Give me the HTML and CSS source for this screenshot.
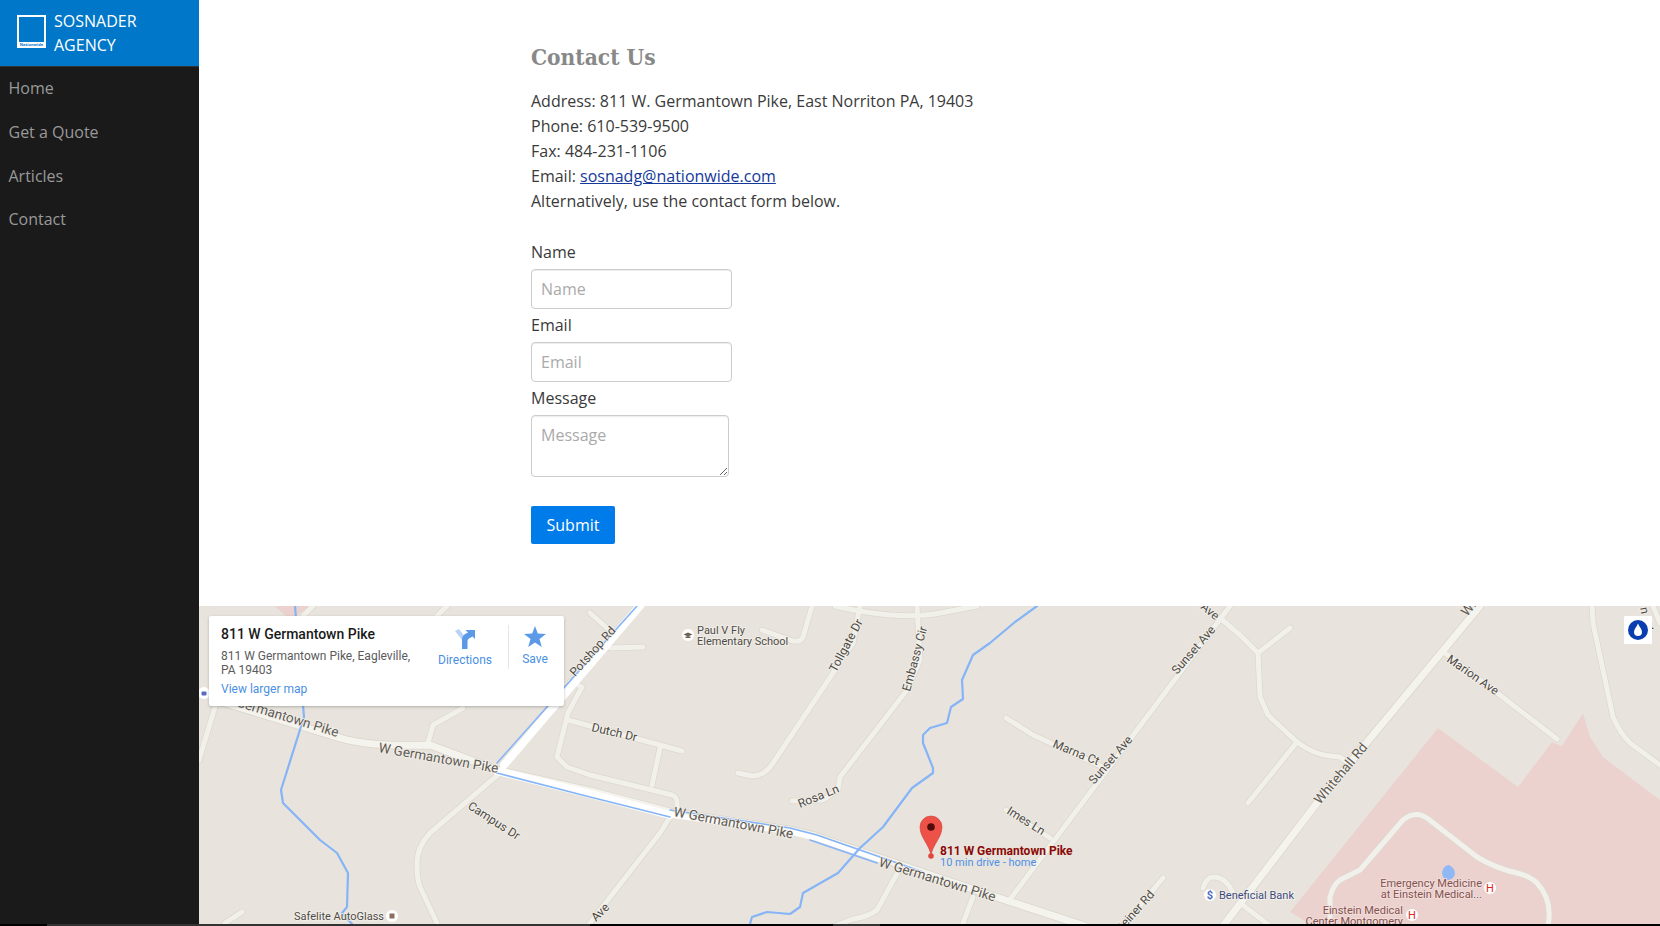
FILE: index.html
```html
<!DOCTYPE html>
<html lang="en">
<head>
  <meta charset="UTF-8">
  <title>Contact Us - Sosnader Agency</title>
  <link rel="stylesheet" href="styles.css">
</head>
<body>
  <div class="page">
    <aside class="sidebar">
      <a class="brand" href="#">
        <svg class="brand-logo" viewBox="0 0 29 33">
          <rect x="1" y="1" width="27" height="31" fill="none" stroke="#fff" stroke-width="2"/>
          <rect x="1" y="27" width="27" height="5" fill="#fff"/>
          <text x="14.5" y="31" text-anchor="middle" class="brand-logo-text">Nationwide</text>
        </svg>
        <span>SOSNADER<br>AGENCY</span>
      </a>
      <nav class="nav">
        <a href="#">Home</a>
        <a href="#">Get a Quote</a>
        <a href="#">Articles</a>
        <a href="#">Contact</a>
      </nav>
    </aside>

    <main class="main">
      <section class="content">
        <h1>Contact Us</h1>
        <p class="details">
          Address: 811 W. Germantown Pike, East Norriton PA, 19403<br>
          Phone: 610-539-9500<br>
          Fax: 484-231-1106<br>
          Email: <a href="#">sosnadg@nationwide.com</a><br>
          Alternatively, use the contact form below.
        </p>
        <form class="form">
          <label for="name">Name</label>
          <input id="name" type="text" placeholder="Name">
          <label for="email">Email</label>
          <input id="email" type="text" placeholder="Email">
          <label for="message">Message</label>
          <textarea id="message" placeholder="Message"></textarea>
          <button type="button">Submit</button>
        </form>
      </section>

      <section class="map">
        <svg class="map-canvas" viewBox="199 606 1461 318">
          <defs>
            <g id="minor-roads">
              <path d="M199 760 L215 707"/>
              <path d="M500 773 L430 833 Q417 847 417 863 Q417 880 420 887 L437 923"/>
              <path d="M242 912 L225 923"/>
              <path d="M428 743 L433 725 L463 708"/>
              <path d="M313 606 L303 616"/>
              <path d="M447 606 L437 616"/>
              <path d="M570 682 L582 687 L568 713 L557 757 L567 767 L590 775 L672 795 Q677 797 677 802 L677 810"/>
              <path d="M568 720 L682 751"/>
              <path d="M660 748 L652 785"/>
              <path d="M590 613 L607 628"/>
              <path d="M610 648 L643 647"/>
              <path d="M762 630 L793 641 Q801 642 803 637 L812 606"/>
              <path d="M860 606 L853 643 L833 673 L773 763 Q765 776 752 776 L738 773"/>
              <path d="M917 606 L920 660 L907 690 L840 777 L838 790 L823 800 L792 801"/>
              <path d="M835 606 Q860 612 890 615 Q920 617 940 613 L977 606"/>
              <path d="M670 817 L660 833 L590 923"/>
              <path d="M898 872 L877 910 Q870 916 850 920 L835 926"/>
              <path d="M973 897 L962 926"/>
              <path d="M1230 606 L1008 902"/>
              <path d="M1006 718 L1033 735 L1103 767"/>
              <path d="M1006 810 L1050 838"/>
              <path d="M1220 618 L1240 635 L1258 653 L1260 697 L1268 715 L1297 742 Q1315 755 1330 756 L1340 757 L1348 763"/>
              <path d="M1258 653 L1290 628"/>
              <path d="M1297 742 L1248 803"/>
              <path d="M1445 653 L1557 739"/>
              <path d="M1592 606 L1593 623 L1613 717 Q1620 733 1630 743 L1660 765"/>
              <path d="M1653 606 L1660 623"/>
              <path d="M1330 926 L1330 897 Q1333 885 1340 880 L1360 870 L1403 820 Q1415 810 1427 818 L1477 857 Q1495 868 1517 873 Q1530 876 1537 883 Q1553 900 1548 926"/>
              <path d="M1163 878 L1123 926"/>
              <path d="M1203 888 Q1207 877 1213 877 Q1226 877 1233 893"/>
              <path d="M1240 903 L1270 926"/>
            </g>
            <g id="major-roads">
              <path d="M1480 606 L1363 747 L1317 803 L1223 926"/>
              <path d="M215 700 L340 738 Q370 747 430 745 L497 770 L590 791 L670 812 L790 830 L815 836 L880 858 L990 895 L1085 926"/>
            </g>
          </defs>

          <rect x="199" y="606" width="1461" height="318" class="map-ground"/>
          <polygon class="map-hospital" points="1438,728 1518,787 1552,742 1562,746 1583,713 1590,737 1603,757 1660,800 1660,924 1310,924 1290,912"/>
          <polygon class="map-hospital" points="275,606 310,606 290,620"/>
          <path class="map-pond" d="M1442 872 Q1444 865 1449 865 Q1455 868 1455 874 Q1454 879 1448 880 Q1442 879 1442 872Z"/>

          <use href="#minor-roads" class="road-edge"/>
          <use href="#major-roads" class="road-edge-wide"/>
          <use href="#minor-roads" class="road-fill"/>
          <use href="#major-roads" class="road-fill-wide"/>

          <path class="road-highway" d="M497 771 L590 794 L670 815"/>
          <path class="road-highway road-highway-thin" d="M670 815 L790 832 L815 838 L880 860"/>
          <path class="road-highway" d="M640 606 L504 765"/>

          <path class="water" d="M295 606 L304 717 L281 790 L283 803 L320 840 L337 853 L348 873 L347 907 L342 913 L352 924"/>
          <path class="water" d="M750 924 L752 917 L767 912 L790 914 L800 907 L803 893 L838 873 L860 848 L883 827 L912 788 L933 773 L933 768 L923 743 L923 735 L930 728 L947 723 L951 707 L963 699 L962 680 L973 655 L990 643 L1015 622 L1037 606"/>
          <path class="rail" d="M637 606 L497 763"/>
          <path class="rail" d="M497 773 L590 797 L670 817"/>
          <path class="rail" d="M670 810 L790 828 L817 835 L923 872"/>
          <path class="rail" d="M810 840 L877 863"/>

          <g class="map-label map-label-street">
            <text x="467" y="808" transform="rotate(33 467 808)">Campus Dr</text>
            <text x="575" y="677" transform="rotate(-48 575 677)">Potshop Rd</text>
            <text x="591" y="731" transform="rotate(13 591 731)">Dutch Dr</text>
            <text x="836" y="673" transform="rotate(-62 836 673)">Tollgate Dr</text>
            <text x="910" y="692" transform="rotate(-75 910 692)">Embassy Cir</text>
            <text x="800" y="808" transform="rotate(-22 800 808)">Rosa Ln</text>
            <text x="596" y="922" transform="rotate(-45 596 922)">Ave</text>
            <text x="1094" y="785" transform="rotate(-49 1094 785)">Sunset Ave</text>
            <text x="1177" y="675" transform="rotate(-49 1177 675)">Sunset Ave</text>
            <text x="1200" y="608" transform="rotate(40 1200 608)">Ave</text>
            <text x="1052" y="747" transform="rotate(22 1052 747)">Marna Ct</text>
            <text x="1006" y="813" transform="rotate(32 1006 813)">Imes Ln</text>
            <text x="1155" y="895" text-anchor="end" transform="rotate(-48 1155 895)">Steiner Rd</text>
            <text x="1446" y="661" transform="rotate(35 1446 661)">Marion Ave</text>
            <text x="1640" y="608" transform="rotate(78 1640 608)">n Rd</text>
          </g>
          <g class="map-label map-label-main">
            <text x="337" y="737" text-anchor="end" transform="rotate(17 337 737)">W Germantown Pike</text>
            <text x="378" y="752" transform="rotate(10 378 752)">W Germantown Pike</text>
            <text x="673" y="816" transform="rotate(10.7 673 816)">W Germantown Pike</text>
            <text x="878" y="866" transform="rotate(17 878 866)">W Germantown Pike</text>
            <text x="1320" y="805" transform="rotate(-50 1320 805)">Whitehall Rd</text>
            <text x="1467" y="617" transform="rotate(-50 1467 617)">Whitehall Rd</text>
          </g>
          <g class="map-label">
            <text x="294" y="920">Safelite AutoGlass</text>
            <text x="697" y="634">Paul V Fly</text>
            <text x="697" y="645">Elementary School</text>
          </g>
          <text class="map-label-bank" x="1219" y="899">Beneficial Bank</text>
          <g class="map-label map-label-med" text-anchor="end">
            <text x="1482" y="887">Emergency Medicine</text>
            <text x="1482" y="898">at Einstein Medical...</text>
            <text x="1403" y="914">Einstein Medical</text>
            <text x="1403" y="925">Center Montgomery</text>
          </g>

          <circle cx="392" cy="916" r="6" class="poi"/>
          <rect x="389.5" y="913.5" width="5" height="5" fill="#8d6e63"/>
          <circle cx="688" cy="635" r="6" class="poi"/>
          <path d="M683.5 634.5 L688 632.5 L692.5 634.5 L688 636.5Z M685.5 636.5 V638 H690.5 V636.5" fill="#6d5f52"/>
          <circle cx="204" cy="693" r="6" class="poi"/>
          <rect x="201.5" y="691.5" width="5" height="4" rx="1" fill="#5c6bc0"/>
          <circle cx="1210" cy="895" r="6" class="poi"/>
          <text x="1210" y="899" text-anchor="middle" class="poi-mark poi-mark-bank">$</text>
          <circle cx="1490" cy="888" r="6" class="poi"/>
          <text x="1490" y="892" text-anchor="middle" class="poi-mark poi-mark-med">H</text>
          <circle cx="1412" cy="915" r="6" class="poi"/>
          <text x="1412" y="919" text-anchor="middle" class="poi-mark poi-mark-med">H</text>

          <path d="M931 856 C930 845 920 838 920 827 A11 11 0 0 1 942 827 C942 838 932 845 931 856Z" fill="#ee5148" stroke="#c9453d" stroke-width=".6"/>
          <circle cx="931" cy="827" r="3.8" fill="#4e0d09"/>
          <circle cx="931" cy="856" r="2.8" fill="#e0483f"/>
          <text class="pin-title" x="940" y="855">811 W Germantown Pike</text>
          <text class="pin-sub" x="940" y="866">10 min drive - home</text>
        </svg>

        <div class="map-card">
          <div class="map-card-info">
            <h2>811 W Germantown Pike</h2>
            <p>811 W Germantown Pike, Eagleville, PA 19403</p>
            <a href="#">View larger map</a>
          </div>
          <a class="map-action map-action-directions" href="#">
            <svg width="22" height="20" viewBox="0 0 22 20">
              <path d="M1 2 L5 0 L11 8 V11 L9 12Z" fill="#b9d2f3"/>
              <path d="M8 20 V10 Q8 7 11 5 L14 3.5 L11.5 1 H21 V10 L18.5 7.5 L15 9.5 Q13.5 10.5 13.5 12 V20Z" fill="#5c9ae8"/>
            </svg>
            Directions
          </a>
          <a class="map-action map-action-save" href="#">
            <svg width="22" height="21" viewBox="0 0 22 21">
              <path d="M11 0 L13.8 7.6 L22 8 L15.5 13 L17.8 21 L11 16.4 L4.2 21 L6.5 13 L0 8 L8.2 7.6Z" fill="#5c9ae8"/>
            </svg>
            Save
          </a>
        </div>

        <div class="map-control">
          <svg width="20" height="20" viewBox="0 0 20 20">
            <circle cx="10" cy="10" r="10" fill="#0a3db0"/>
            <path d="M10 3.5 C11.5 7 14 9 14 12 A4 4 0 0 1 6 12 C6 9 8.5 7 10 3.5Z" fill="#fff"/>
          </svg>
        </div>
      </section>
    </main>
  </div>
</body>
</html>
```

FILE: styles.css
```css
* {
  box-sizing: border-box;
}
html, body {
  height: 926px;
  margin: 0;
  overflow: hidden;
}
body {
  font-family: "Open Sans", sans-serif;
  font-size: 16px;
  line-height: 25px;
  color: #3a3a3a;
  /* thin strip left showing under the page */
  background: linear-gradient(to right, #000 47px, #333 47px, #333 590px, #000 590px, #000 833px, #333 833px, #333 880px, #000 880px);
}
.page {
  display: flex;
  height: 924px;
}

/* sidebar */
.sidebar {
  width: 199px;
  flex: none;
  background: #1a1a1a;
}
.brand {
  height: 67px;
  padding: 9px 0 0 17px;
  display: flex;
  gap: 8px;
  background: #0077c8;
  border-bottom: 1px solid #333;
  color: #fff;
  text-decoration: none;
  line-height: 24px;
}
.brand-logo {
  width: 29px;
  height: 33px;
  margin-top: 6px;
  flex: none;
}
.brand-logo-text {
  font-family: "Open Sans", sans-serif;
  font-size: 4px;
  font-weight: 700;
  fill: #0077c8;
}
.nav {
  padding-top: .4px;
}
.nav a {
  display: block;
  padding: 9px 8.5px;
  line-height: 25.6px;
  color: #999;
  text-decoration: none;
}

/* content */
.main {
  flex: 1;
  min-width: 0;
  display: flex;
  flex-direction: column;
  background: #fff;
}
.content {
  height: 606px;
  flex: none;
  padding: 41px 0 0 332px;
}
h1 {
  margin: 0 0 16px;
  font-family: "DejaVu Serif Condensed", "DejaVu Serif", serif;
  font-size: 22.5px;
  line-height: 32px;
  font-weight: 700;
  color: #888;
}
.details {
  margin: 0 0 26px;
}
.details a {
  color: #14399a;
}
.form {
  display: flex;
  flex-direction: column;
  align-items: flex-start;
}
.form label {
  margin-bottom: 4px;
}
.form input, .form textarea {
  display: block;
  width: 201px;
  height: 40px;
  margin-bottom: 4px;
  padding: 0 9px;
  border: 1px solid #ccc;
  border-radius: 4px;
  box-shadow: inset 0 1px 1px rgba(0, 0, 0, .075);
  font-family: inherit;
  font-size: 16px;
  color: #333;
}
.form textarea {
  width: 198px;
  height: 62px;
  margin-bottom: 29px;
  padding: 8px 9px;
}
.form ::placeholder {
  color: #aaa;
  opacity: 1;
}
.form button {
  width: 84px;
  height: 38px;
  border: 0;
  border-radius: 2px;
  background: #007bea;
  color: #fff;
  font-family: inherit;
  font-size: 16px;
}

/* map */
.map {
  position: relative;
  height: 318px;
  flex: none;
  overflow: hidden;
}
.map-canvas {
  display: block;
  width: 100%;
  height: 100%;
}
.map-ground {
  fill: #e8e4dd;
}
.map-hospital {
  fill: #ecd2cf;
}
.map-pond {
  fill: #8fb8f5;
}
.road-edge, .road-edge-wide, .road-fill, .road-fill-wide, .road-highway, .water, .rail {
  fill: none;
  stroke-linecap: round;
  stroke-linejoin: round;
}
.road-edge {
  stroke: #dcd8ce;
  stroke-width: 6.5;
}
.road-fill {
  stroke: #f2f0ea;
  stroke-width: 5;
}
.road-edge-wide {
  stroke: #d9d5ca;
  stroke-width: 8.5;
}
.road-fill-wide {
  stroke: #f5f3ed;
  stroke-width: 7;
}
.road-highway {
  stroke: #fff;
  stroke-width: 8;
}
.road-highway-thin {
  stroke-width: 5;
}
.water {
  stroke: #85b4f7;
  stroke-width: 2.2;
}
.rail {
  stroke: #85b4f7;
  stroke-width: 1.6;
}
.map-label text, .map-label-bank {
  font-family: Roboto, sans-serif;
  font-size: 11px;
  fill: #4f4a44;
  stroke: #f3f1ec;
  stroke-width: 1.5px;
  paint-order: stroke;
}
.map-label-street text {
  font-size: 12px;
}
.map-label-main text {
  font-size: 13.5px;
  fill: #5f5a53;
}
.map-label-bank {
  fill: #3d4a7a;
}
.map-label-med text {
  fill: #85504d;
  stroke: #f2e0de;
}
.poi {
  fill: #fff;
}
.poi-mark {
  font-family: Roboto, sans-serif;
  font-size: 11px;
}
.poi-mark-bank {
  font-weight: 700;
  fill: #4a6cc4;
}
.poi-mark-med {
  fill: #d9291c;
}
.pin-title {
  font-family: Roboto, sans-serif;
  font-size: 12px;
  font-weight: 700;
  fill: #8b0a06;
}
.pin-sub {
  font-family: Roboto, sans-serif;
  font-size: 11px;
  fill: #4d90e6;
}
.map-card {
  position: absolute;
  top: 10px;
  left: 10px;
  width: 355px;
  height: 90px;
  padding: 9px 0 0 12px;
  display: flex;
  background: #fff;
  border-radius: 2px;
  box-shadow: 0 1px 3px rgba(0, 0, 0, .25);
  font-family: Roboto, sans-serif;
}
.map-card-info {
  width: 196px;
  flex: none;
  font-size: 12px;
  line-height: 14px;
}
.map-card h2 {
  margin: 0 0 6px;
  font-size: 14px;
  line-height: 18px;
  font-weight: 500;
  color: #1a1a1a;
}
.map-card p {
  margin: 0 0 5px;
  color: #5b5b5b;
}
.map-card a {
  color: #4a8fe3;
  text-decoration: none;
}
.map-action {
  display: flex;
  flex-direction: column;
  align-items: center;
  gap: 4px;
  font-size: 12px;
  line-height: 14px;
}
.map-action-directions {
  width: 78px;
  height: 44px;
  margin: 0 4px 0 9px;
  padding-top: 4px;
}
.map-action-save {
  width: 53px;
  height: 44px;
  padding-top: 1px;
  gap: 5px;
  border-left: 1px solid #e6e6e6;
}
.map-control {
  position: absolute;
  top: 10px;
  right: 8px;
  width: 28px;
  height: 28px;
  display: flex;
  align-items: center;
  justify-content: center;
  background: #fff;
  border-radius: 1px;
}
```
